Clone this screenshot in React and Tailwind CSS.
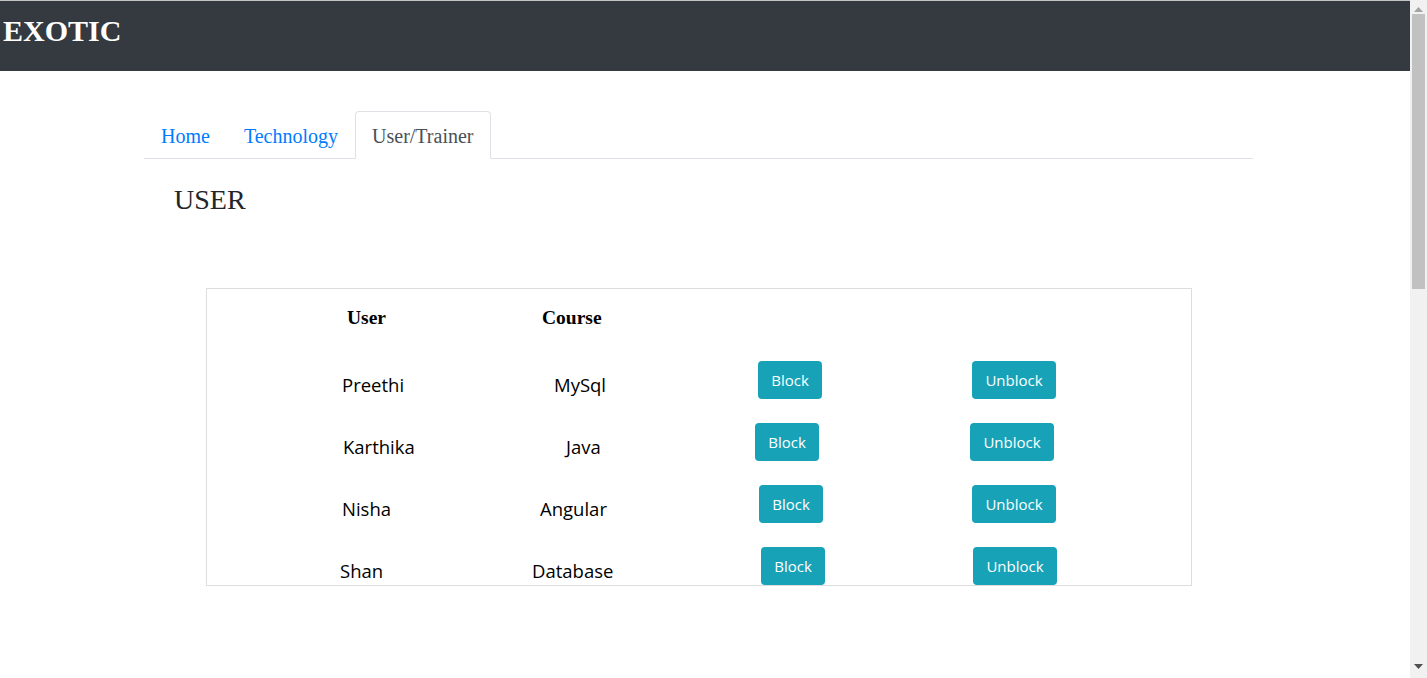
import React from "react";

const serif = "font-['Liberation_Serif','Times_New_Roman',serif]";
const sans = "font-['Open_Sans','Noto_Sans',sans-serif]";

const rows = [
  { user: "Preethi", course: "MySql", u: "ml-[135px]", c: "ml-[47px]", b: "ml-[31px]", ub: "ml-[25px]" },
  { user: "Karthika", course: "Java", u: "ml-[136px]", c: "ml-[59px]", b: "ml-[28px]", ub: "ml-[23px]" },
  { user: "Nisha", course: "Angular", u: "ml-[135px]", c: "ml-[33px]", b: "ml-[32px]", ub: "ml-[25px]" },
  { user: "Shan", course: "Database", u: "ml-[133px]", c: "ml-[25px]", b: "ml-[34px]", ub: "ml-[26px]" },
];

function Btn({ children, w, ml }) {
  return (
    <div className={`shrink-0 ${ml}`}>
      <button
        className={`${w} h-[38px] bg-[#17a2b8] text-white rounded-[4px] ${sans} text-[15px] leading-[20px] flex items-center justify-center`}
      >
        {children}
      </button>
    </div>
  );
}

export default function App() {
  return (
    <div className="flex w-[1427px] h-[678px] overflow-hidden bg-white">
      <div className="w-[1410px] flex flex-col">
        <div className="h-px bg-[#c4c4c4]" />
        <div className="h-[70px] bg-[#343a40] pl-[3px] pt-[12px]">
          <div className={`${serif} font-bold text-[30px] leading-[36px] text-white`}>EXOTIC</div>
        </div>

        <div className="ml-[144px] w-[1109px] mt-[40px]">
          <ul className={`flex border-b border-[#dee2e6] h-[48px] ${serif} text-[20px] leading-[30px]`}>
            <li className="-mb-px">
              <a className="block px-4 pt-[9px] pb-[7px] border border-transparent rounded-t-[4px] text-[#007bff]">Home</a>
            </li>
            <li className="-mb-px">
              <a className="block px-4 pt-[9px] pb-[7px] border border-transparent rounded-t-[4px] text-[#007bff]">Technology</a>
            </li>
            <li className="-mb-px">
              <a className="block px-4 pt-[9px] pb-[7px] border border-[#dee2e6] border-b-white bg-white rounded-t-[4px] text-[#495057]">
                User/Trainer
              </a>
            </li>
          </ul>

          <h3 className={`${serif} text-[28px] leading-[33.6px] text-[#212529] ml-[30px] mt-[24px]`}>USER</h3>
        </div>

        <div className="ml-[206px] mt-[71px] w-[986px] h-[298px] border border-[#dddddd] overflow-hidden">
          <div className={`h-[72px] pt-[17px] flex ${serif} font-bold text-[19.5px] leading-[24px] text-black`}>
            <div className="w-[300px] shrink-0">
              <span className="ml-[140px]">User</span>
            </div>
            <div className="w-[220px] shrink-0">
              <span className="ml-[35px]">Course</span>
            </div>
          </div>
          {rows.map((r) => (
            <div key={r.user} className="h-[62px] flex items-start shrink-0">
              <div className={`w-[300px] shrink-0 mt-[12px] ${sans} text-[18.5px] leading-[24px] text-black`}>
                <span className={`inline-block ${r.u}`}>{r.user}</span>
              </div>
              <div className={`w-[220px] shrink-0 mt-[12px] ${sans} text-[18.5px] leading-[24px] text-black`}>
                <span className={`inline-block ${r.c}`}>{r.course}</span>
              </div>
              <div className="w-[220px] shrink-0">
                <Btn w="w-[64px]" ml={r.b}>Block</Btn>
              </div>
              <div className="flex-1">
                <Btn w="w-[84px]" ml={r.ub}>Unblock</Btn>
              </div>
            </div>
          ))}
        </div>
      </div>

      <div className="w-[17px] h-[678px] bg-[#f1f1f1] flex flex-col">
        <div className="h-[14px] flex items-center justify-center">
          <svg width="9" height="5" viewBox="0 0 9 5" className="mt-[4px]">
            <polygon points="4.5,0 9,5 0,5" fill="#a3a3a3" />
          </svg>
        </div>
        <div className="mx-[2px] h-[275px] bg-[#c1c1c1]" />
        <div className="flex-1" />
        <div className="h-[17px] flex items-start justify-center">
          <svg width="9" height="5" viewBox="0 0 9 5" className="mt-[3px]">
            <polygon points="0,0 9,0 4.5,5" fill="#505050" />
          </svg>
        </div>
      </div>
    </div>
  );
}
